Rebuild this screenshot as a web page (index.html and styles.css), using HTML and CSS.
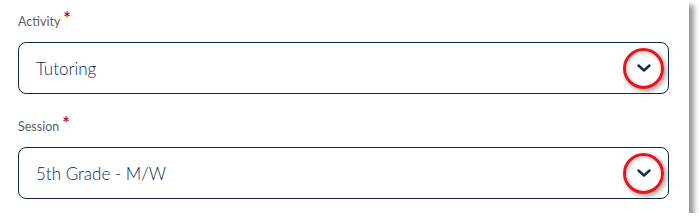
FILE: index.html
```html
<!DOCTYPE html>
<html>
<head>
<meta charset="utf-8">
<link rel="stylesheet" href="styles.css">
</head>
<body>
<div class="panel">
  <div class="field">
    <div class="label">Activity<span class="req">*</span></div>
    <div class="select">
      <span class="value">Tutoring</span>
      <span class="toggle">
        <svg width="14" height="8" viewBox="0 0 14 8"><path d="M1.5 1.5 L7 6.5 L12.5 1.5" fill="none" stroke="#12304f" stroke-width="2.4" stroke-linecap="round" stroke-linejoin="round"/></svg>
      </span>
    </div>
  </div>
  <div class="field">
    <div class="label">Session<span class="req">*</span></div>
    <div class="select">
      <span class="value">5th Grade - M/W</span>
      <span class="toggle">
        <svg width="14" height="8" viewBox="0 0 14 8"><path d="M1.5 1.5 L7 6.5 L12.5 1.5" fill="none" stroke="#12304f" stroke-width="2.4" stroke-linecap="round" stroke-linejoin="round"/></svg>
      </span>
    </div>
  </div>
</div>
</body>
</html>
```
FILE: styles.css
```css
html, body {
  margin: 0;
  padding: 0;
  background: #ffffff;
}
.panel {
  width: 689px;
  height: 213px;
  box-sizing: border-box;
  background: #ffffff;
  padding: 14px 20px 0 18px;
  box-shadow: 5px 5px 5px rgba(0, 0, 0, 0.4);
  font-family: "Lato", "Open Sans", sans-serif;
  display: flex;
  flex-direction: column;
  gap: 25px;
}
.label {
  font-size: 12.5px;
  line-height: 16px;
  color: #5a5e66;
  height: 16px;
  margin-bottom: 12px;
}
.req {
  color: #c8102e;
  font-size: 18px;
  font-weight: 700;
  position: relative;
  top: -1px;
  margin-left: 3px;
  line-height: 0;
}
.select {
  height: 52px;
  box-sizing: border-box;
  border: 1px solid #0f2a48;
  border-radius: 8px;
  display: flex;
  align-items: center;
  justify-content: space-between;
  padding: 0 4px 0 17px;
}
.value {
  font-size: 17px;
  font-weight: 300;
  color: #082850;
}
.toggle {
  width: 41px;
  height: 41px;
  box-sizing: border-box;
  border: 3.5px solid #e8141c;
  border-radius: 50%;
  display: flex;
  align-items: center;
  justify-content: center;
  box-shadow: 2px 2px 5px rgba(0, 0, 0, 0.4), inset 1px 1px 4px rgba(0, 0, 0, 0.25);
}
.toggle svg {
  display: block;
}
```
